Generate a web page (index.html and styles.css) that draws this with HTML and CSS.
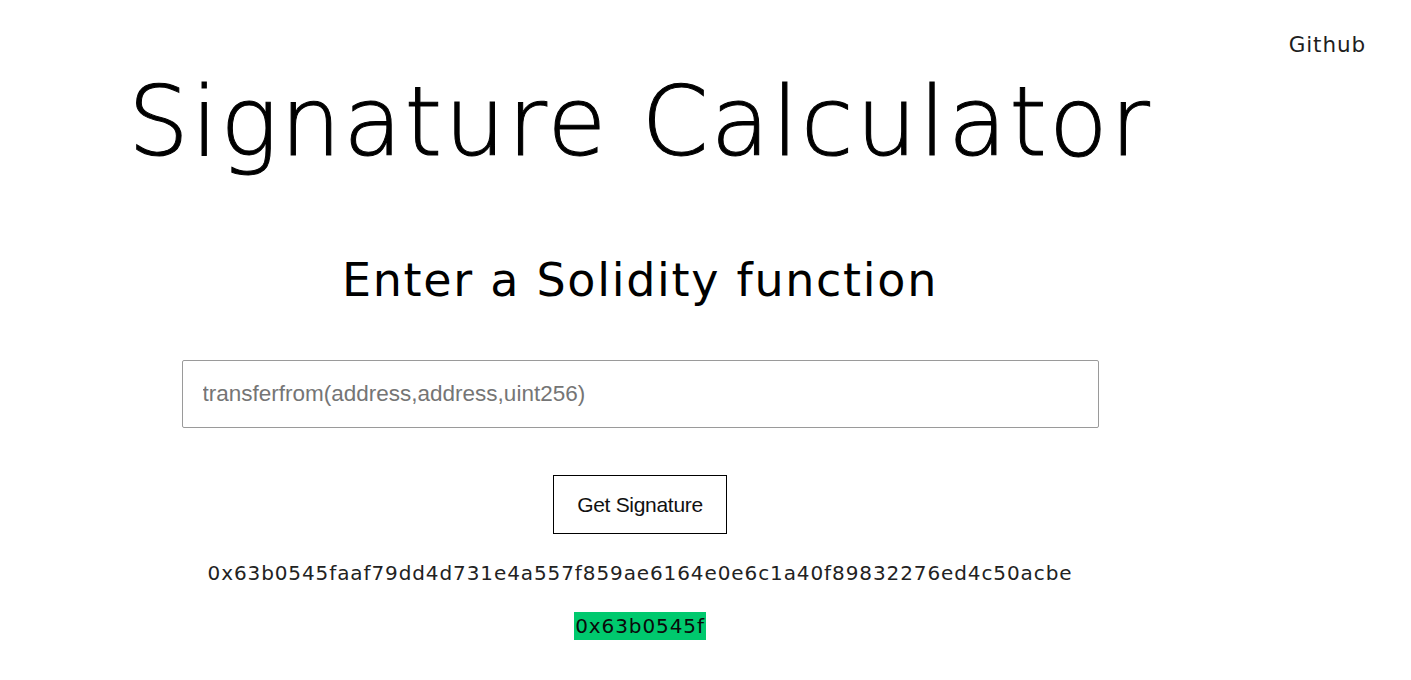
FILE: index.html
```html
<!DOCTYPE html>
<html>
<head>
<meta charset="utf-8">
<title>Signature Calculator</title>
<link rel="stylesheet" href="styles.css">
</head>
<body>
<header class="topbar">
  <a class="github" href="#">Github</a>
</header>
<main class="main">
  <h1 class="title">Signature Calculator</h1>
  <h2 class="subtitle">Enter a Solidity function</h2>
  <input class="fn-input" type="text" placeholder="transferfrom(address,address,uint256)">
  <button class="get-btn" type="button">Get Signature</button>
  <p class="hash">0x63b0545faaf79dd4d731e4a557f859ae6164e0e6c1a40f89832276ed4c50acbe</p>
  <p class="selector"><span class="selector-hl">0x63b0545f</span></p>
</main>
</body>
</html>
```
FILE: styles.css
```css
html, body {
  margin: 0;
  padding: 0;
  background: #ffffff;
  color: #000000;
  font-family: "DejaVu Sans", "Noto Sans", sans-serif;
}

.topbar {
  display: flex;
  justify-content: flex-end;
  padding: 33px 45px 0 0;
  height: 24px;
}

.github {
  font-size: 21.5px;
  letter-spacing: 0.9px;
  color: #1e1e1e;
  text-decoration: none;
  line-height: 24px;
}

.main {
  width: 1280px;
  display: flex;
  flex-direction: column;
  align-items: center;
}

.title {
  margin: 10px 0 0 0;
  font-size: 96px;
  font-weight: 200;
  line-height: 110px;
  letter-spacing: 2.3px;
  -webkit-text-stroke: 1px #000;
}

.subtitle {
  margin: 75px 0 0 0;
  font-size: 46px;
  font-weight: 400;
  line-height: 56px;
  letter-spacing: 1.7px;
}

.fn-input {
  margin-top: 52px;
  width: 917px;
  height: 68px;
  box-sizing: border-box;
  border: 1px solid #9a9a9a;
  border-radius: 2px;
  padding: 0 20px;
  font-family: "Liberation Sans", Arial, sans-serif;
  font-size: 22.5px;
  color: #333;
  outline: none;
}

.fn-input::placeholder {
  color: #757575;
}

.get-btn {
  margin-top: 47px;
  width: 174px;
  height: 59px;
  box-sizing: border-box;
  border: 1px solid #000;
  background: #fff;
  font-family: "Liberation Sans", Arial, sans-serif;
  font-size: 21px;
  letter-spacing: -0.3px;
  color: #111;
  padding: 0;
}

.hash {
  margin: 27px 0 0 0;
  font-size: 20px;
  line-height: 24px;
  letter-spacing: 0.9px;
  color: #222;
}

.selector {
  margin: 27px 0 0 0;
  display: flex;
  justify-content: center;
}

.selector-hl {
  display: block;
  background: #00c96e;
  color: #0a0a0a;
  font-size: 20px;
  line-height: 28px;
  letter-spacing: 0.9px;
  padding: 0 1px;
}
```
